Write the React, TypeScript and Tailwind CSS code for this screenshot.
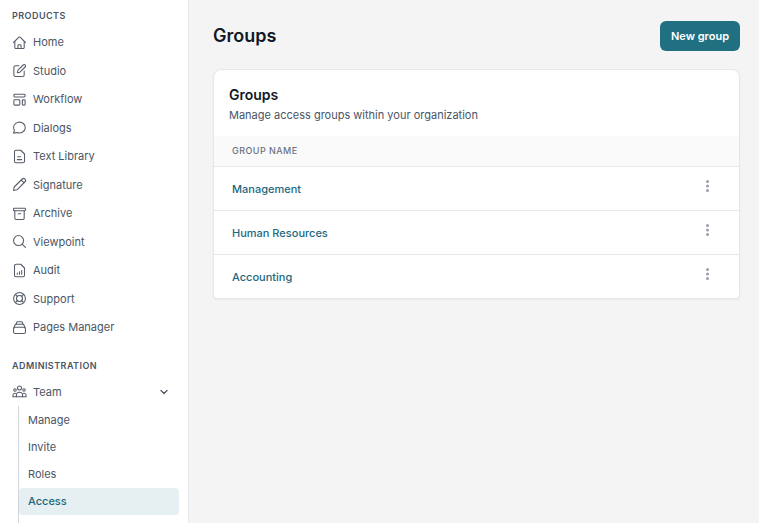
import type { ReactNode } from "react";
import { ChevronDown } from "lucide-react";

type NavItem = {
  label: string;
  icon: ReactNode;
};

const products: NavItem[] = [
  {
    label: "Home",
    icon: (
      <>
        <path d="M2.5 12l8.500-8.500a1.400 1.400 0 0 1 2 0l8.500 8.500" />
        <path d="M4.500 10.500v10a1 1 0 0 0 1 1h13a1 1 0 0 0 1-1v-10" />
        <path d="M9.500 21.500V17a1.500 1.500 0 0 1 1.500-1.500h2a1.500 1.500 0 0 1 1.500 1.500v4.500" />
      </>
    ),
  },
  {
    label: "Studio",
    icon: (
      <>
        <path d="M11 4.500H5.500A2.500 2.500 0 0 0 3 7v12a2.500 2.500 0 0 0 2.500 2.500H17a2.500 2.500 0 0 0 2.500-2.500v-6" />
        <path d="M8.500 15.500l1-4 8.300-8.300a2.200 2.200 0 0 1 3.200 3.200l-8.300 8.300z" />
      </>
    ),
  },
  {
    label: "Workflow",
    icon: (
      <>
        <rect x="3" y="3.500" width="18" height="4.500" rx="1.500" />
        <rect x="3" y="12.500" width="9.500" height="8.500" rx="1.500" />
        <rect x="16.500" y="12.500" width="4.500" height="8.500" rx="1.500" />
      </>
    ),
  },
  {
    label: "Dialogs",
    icon: <path d="M2.500 21l1.300-4.500A9.400 8.700 0 1 1 8 20z" />,
  },
  {
    label: "Text Library",
    icon: (
      <>
        <path d="M14 2H6.500A2.500 2.500 0 0 0 4 4.500v15A2.500 2.500 0 0 0 6.500 22h11a2.500 2.500 0 0 0 2.500-2.500V8z" />
        <path d="M9 12.500h4.500M8.500 17h7" />
      </>
    ),
  },
  {
    label: "Signature",
    icon: (
      <>
        <path d="M2.500 21.500l1-5.500L16.400 3.200a3 3 0 0 1 4.400 4.400L8 20.500z" />
        <path d="M15 5l4 4" />
      </>
    ),
  },
  {
    label: "Archive",
    icon: (
      <>
        <rect x="2.500" y="3.500" width="19" height="4" rx="1" />
        <path d="M4.500 7.500v12a2 2 0 0 0 2 2h11a2 2 0 0 0 2-2v-12M10 12.500h4" />
      </>
    ),
  },
  {
    label: "Viewpoint",
    icon: (
      <>
        <circle cx="10.500" cy="10.500" r="8" />
        <path d="M16.500 16.500l5 5" />
      </>
    ),
  },
  {
    label: "Audit",
    icon: (
      <>
        <path d="M14 2H6.500A2.500 2.500 0 0 0 4 4.500v15A2.500 2.500 0 0 0 6.500 22h11a2.500 2.500 0 0 0 2.500-2.500V8z" />
        <path d="M8.500 18v-2M12 18v-4M15.500 18v-6" />
      </>
    ),
  },
  {
    label: "Support",
    icon: (
      <>
        <circle cx="12" cy="12" r="9.500" />
        <circle cx="12" cy="12" r="4.800" />
        <path d="M5.300 5.300l3.300 3.300M18.700 5.300l-3.300 3.300M5.300 18.700l3.300-3.300M18.700 18.700l-3.300-3.300" />
      </>
    ),
  },
  {
    label: "Pages Manager",
    icon: (
      <>
        <rect x="2.500" y="11.500" width="19" height="10" rx="2.500" />
        <path d="M3 13l1.800-5A2 2 0 0 1 6.600 6.800h10.800A2 2 0 0 1 19.200 8l1.800 5" />
        <path d="M6.600 6.800l.7-2.500A2 2 0 0 1 9.200 2.800h5.600a2 2 0 0 1 1.900 1.500l.7 2.500" />
      </>
    ),
  },
];

const teamLinks = ["Manage", "Invite", "Roles", "Access"];
const activeLink = "Access";

const groups = ["Management", "Human Resources", "Accounting"];

function Icon({ children }: { children: ReactNode }) {
  return (
    <svg
      viewBox="0 0 24 24"
      className="size-[15px] shrink-0 text-[#565c69]"
      fill="none"
      stroke="currentColor"
      strokeWidth="1.7"
      strokeLinecap="round"
      strokeLinejoin="round"
      aria-hidden="true"
    >
      {children}
    </svg>
  );
}

function Sidebar() {
  return (
    <aside className="w-[189px] shrink-0 overflow-hidden border-r border-gray-200 bg-white pt-2 text-gray-600">
      <nav>
        <h2 className="px-3 text-[9px] leading-4 font-semibold tracking-wider">PRODUCTS</h2>
        <ul className="mt-1">
          {products.map((item) => (
            <li key={item.label}>
              <a href="#" className="flex items-center gap-1.5 px-3 py-1.5 text-[11px] leading-normal">
                <Icon>{item.icon}</Icon>
                {item.label}
              </a>
            </li>
          ))}
        </ul>

        <h2 className="mt-4 px-3 text-[9px] leading-4 font-semibold tracking-wider">ADMINISTRATION</h2>
        <button
          type="button"
          className="mt-1 flex w-full items-center gap-1.5 py-1.5 pr-[18px] pl-3 text-left text-[11px] leading-normal"
        >
          <Icon>
            <circle cx="12" cy="6.500" r="3.200" />
            <circle cx="4.800" cy="9.500" r="2" />
            <circle cx="19.200" cy="9.500" r="2" />
            <path d="M7 20.500v-2.500a5 4.800 0 0 1 10 0v2.500z" />
            <path d="M7 20.500H1.500v-2.500a3.300 3.300 0 0 1 4.500-3M17 20.500h5.500v-2.500a3.300 3.300 0 0 0-4.500-3" />
          </Icon>
          <span className="flex-1">Team</span>
          <ChevronDown className="size-3" strokeWidth={2.5} />
        </button>
        {/* Team links */}
        <ul className="mr-[9px] ml-[18px] border-l border-gray-300 pt-px pb-3">
          {teamLinks.map((link) => (
            <li key={link}>
              <a
                href="#"
                className={
                  link === activeLink
                    ? "flex h-[27px] items-center rounded bg-[#e6eff2] px-[9px] text-[11px] font-medium text-[#1c6880]"
                    : "flex h-[27px] items-center px-[9px] text-[11px]"
                }
              >
                {link}
              </a>
            </li>
          ))}
        </ul>
      </nav>
    </aside>
  );
}

function GroupsCard() {
  return (
    <section className="mt-[18px] overflow-hidden rounded-t-lg rounded-b-sm border border-gray-200 bg-white shadow-xs">
      <div className="px-[15px] pt-[15px] pb-2.5">
        <h2 className="text-sm font-semibold text-gray-900">Groups</h2>
        <p className="text-[11px] leading-[21px] text-gray-600">Manage access groups within your organization</p>
      </div>
      <table className="w-full text-left">
        <thead className="bg-[#fafafa]">
          <tr className="h-[30px] border-b border-gray-200">
            <th scope="col" className="px-[18px] text-[9px] font-medium tracking-wider text-gray-500">
              GROUP NAME
            </th>
            <th scope="col" aria-label="Actions" className="w-16" />
          </tr>
        </thead>
        <tbody>
          {groups.map((group) => (
            <tr key={group} className="h-11 border-b border-gray-200 last:border-b-0">
              <td className="px-[18px] pt-0.5 text-[11px] font-medium text-[#1c6880]">
                <a href="#">{group}</a>
              </td>
              <td className="w-16 pb-1">
                <button type="button" aria-label={`Actions for ${group}`} className="mx-auto block p-1">
                  <svg viewBox="0 0 14 14" className="size-3.5 fill-gray-400" aria-hidden="true">
                    <circle cx="7.500" cy="2.500" r="1.500" />
                    <circle cx="7.500" cy="7" r="1.500" />
                    <circle cx="7.500" cy="11.500" r="1.500" />
                  </svg>
                </button>
              </td>
            </tr>
          ))}
        </tbody>
      </table>
    </section>
  );
}

export default function App() {
  return (
    <div className="flex h-screen overflow-hidden bg-[#f4f4f4] font-[Inter,sans-serif]">
      <Sidebar />
      <main className="min-w-0 flex-1 pt-[21px] pr-[19px] pl-6">
        <header className="flex items-center justify-between">
          <h1 className="text-lg font-semibold text-gray-900">Groups</h1>
          <button type="button" className="h-[30px] rounded-md bg-[#207082] px-[11px] text-[11px] font-semibold text-white">
            New group
          </button>
        </header>
        <GroupsCard />
      </main>
    </div>
  );
}
